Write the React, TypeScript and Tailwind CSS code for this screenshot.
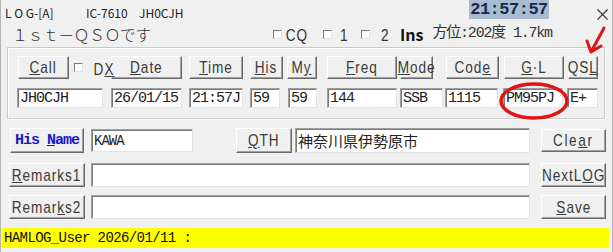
const mono = "font-['Liberation_Mono','Noto_Sans_CJK_JP',monospace]";
const jp = "font-['Noto_Sans_CJK_JP','Noto_Sans',sans-serif]";
const sans = "font-['Liberation_Sans','Noto_Sans',sans-serif]";

const btn =
  "flex items-center justify-center bg-[#f0f0f0] border border-t-white border-l-white border-r-[#696969] border-b-[#696969] shadow-[inset_-1px_-1px_0_#a0a0a0] text-[#3a3a3a] leading-none whitespace-nowrap";
const input =
  "flex items-center bg-white border border-t-[#a0a0a0] border-l-[#a0a0a0] border-r-[#e3e3e3] border-b-[#e3e3e3] shadow-[inset_1px_1px_0_#7a7a7a] pl-[2px] text-[15px] tracking-[-1px] text-[#222] leading-none whitespace-nowrap overflow-hidden " +
  mono;

// tall, narrow label text like the old Windows UI font
function Lbl({ children, className = "" }: { children: React.ReactNode; className?: string }) {
  return (
    <span className={`inline-block scale-x-[0.8] text-[17px] tracking-[1.2px] leading-none ${sans} ${className}`}>
      {children}
    </span>
  );
}

function Check() {
  return (
    <span className="block w-[9px] h-[9px] bg-white border border-t-[#7a7a7a] border-l-[#7a7a7a] border-r-[#e3e3e3] border-b-[#e3e3e3]" />
  );
}

function Btn({ w, ml, h = "h-[23px]", children }: { w: string; ml: string; h?: string; children: React.ReactNode }) {
  return <div className={`${btn} ${w} ${ml} ${h}`}>{children}</div>;
}

function Field({ w, ml, h = "h-[20px]", children }: { w: string; ml: string; h?: string; children?: React.ReactNode }) {
  return <div className={`${input} ${w} ${ml} ${h}`}>{children}</div>;
}

export default function App() {
  return (
    <div className={`relative w-[613px] h-[252px] bg-[#f0f0f0] overflow-hidden border-l border-r border-[#b4b4b4] ${jp}`}>
      {/* title row */}
      <div className="flex h-[21px] text-[12px] leading-none text-[#222]">
        <div className="w-[85px] pl-[4px] pt-[7px] whitespace-pre">L O G-[A]</div>
        <div className="w-[53px] pt-[7px]">IC-7610</div>
        <div className="w-[330px] pt-[7px]">JH0CJH</div>
        <div className={`w-[80px] h-[19px] bg-[#a9bbd0] flex items-center justify-center text-[17px] font-bold text-[#17294a] tracking-[-0.5px] ${mono}`}>
          21:57:57
        </div>
        <div className="ml-[45px] pt-[5px] text-[17px] text-[#333]">×</div>
      </div>

      {/* status row */}
      <div className="flex items-center h-[26px] text-[#333]">
        <div className="ml-[11px] w-[261px] text-[16px] font-light leading-none whitespace-nowrap tracking-[-0.6px]">１ｓｔ－ＱＳＯです</div>
        <Check />
        <span className="ml-[1px] w-[40px]">
          <Lbl>CQ</Lbl>
        </span>
        <Check />
        <span className="ml-[7px] w-[22px]">
          <Lbl>1</Lbl>
        </span>
        <Check />
        <span className="ml-[10px] w-[20px]">
          <Lbl>2</Lbl>
        </span>
        <span className={`text-[16px] font-bold text-[#111] ${jp}`}>Ins</span>
        <span className={`ml-[9px] text-[15px] tracking-[-1.2px] ${mono}`}>方位:202度 1.7km</span>
      </div>

      {/* group box */}
      <div className="ml-[6px] w-[598px] h-[72px] border border-[#c8c8c8] shadow-[inset_1px_1px_0_#fff,1px_1px_0_#fff] pt-[8px]">
        <div className="flex items-center h-[23px]">
          <Btn w="w-[51px]" ml="ml-[10px]">
            <Lbl>
              <u>C</u>all
            </Lbl>
          </Btn>
          <span className="ml-[5px]">
            <Check />
          </span>
          <span className="ml-[8px] w-[20px] text-[#3a3a3a]">
            <Lbl className="tracking-[0px]">
              D<u>X</u>
            </Lbl>
          </span>
          <Btn w="w-[71px]" ml="ml-0">
            <Lbl>
              <u>D</u>ate
            </Lbl>
          </Btn>
          <Btn w="w-[54px]" ml="ml-[7px]">
            <Lbl>
              <u>T</u>ime
            </Lbl>
          </Btn>
          <Btn w="w-[33px]" ml="ml-[7px]">
            <Lbl>
              <u>H</u>is
            </Lbl>
          </Btn>
          <Btn w="w-[30px]" ml="ml-[4px]">
            <Lbl>
              M<u>y</u>
            </Lbl>
          </Btn>
          <Btn w="w-[70px]" ml="ml-[10px]">
            <Lbl>
              <u>F</u>req
            </Lbl>
          </Btn>
          <Btn w="w-[33px]" ml="ml-[3px]">
            <Lbl className="tracking-[0px]">
              <u>M</u>ode
            </Lbl>
          </Btn>
          <Btn w="w-[53px]" ml="ml-[13px]">
            <Lbl>
              Cod<u>e</u>
            </Lbl>
          </Btn>
          <Btn w="w-[60px]" ml="ml-[5px]">
            <Lbl>
              <u>G</u>·L
            </Lbl>
          </Btn>
          <Btn w="w-[30px]" ml="ml-[4px]">
            <Lbl className="tracking-[0px]">
              QS<u>L</u>
            </Lbl>
          </Btn>
        </div>
        <div className="flex items-center mt-[9px]">
          <Field w="w-[86px]" ml="ml-[9px]">JH0CJH</Field>
          <Field w="w-[71px]" ml="ml-[8px]">26/01/15</Field>
          <Field w="w-[54px]" ml="ml-[7px]">21:57J</Field>
          <Field w="w-[30px]" ml="ml-[7px]">59</Field>
          <Field w="w-[29px]" ml="ml-[8px]">59</Field>
          <Field w="w-[70px]" ml="ml-[10px]">144</Field>
          <Field w="w-[43px]" ml="ml-[3px]">SSB</Field>
          <Field w="w-[53px]" ml="ml-[2px]">1115</Field>
          <Field w="w-[60px]" ml="ml-[5px]">PM95PJ</Field>
          <Field w="w-[31px]" ml="ml-[4px]">E+</Field>
        </div>
      </div>

      {/* lower rows */}
      <div className="flex items-center h-[25px] mt-[9px]">
        <Btn w="w-[74px]" ml="ml-[9px]" h="h-[25px]">
          <span className={`font-bold text-[#1818c8] text-[15px] tracking-[-1px] ${mono}`}>
            His <u>N</u>ame
          </span>
        </Btn>
        <Field w="w-[102px]" ml="ml-[7px]" h="h-[23px]">
          <span className="text-[14px]">KAWA</span>
        </Field>
        <Btn w="w-[56px]" ml="ml-[43px]" h="h-[25px]">
          <Lbl>
            <u>Q</u>TH
          </Lbl>
        </Btn>
        <Field w="w-[235px]" ml="ml-[3px]" h="h-[25px]">
          <span className={`text-[15px] tracking-normal ${jp}`}>神奈川県伊勢原市</span>
        </Field>
        <Btn w="w-[65px]" ml="ml-[11px]">
          <Lbl className="tracking-[2px]">
            Cle<u>a</u>r
          </Lbl>
        </Btn>
      </div>
      <div className="flex items-center h-[24px] mt-[10px]">
        <Btn w="w-[76px]" ml="ml-[8px]" h="h-[24px]">
          <Lbl className="tracking-[0.5px]">
            <u>R</u>emarks1
          </Lbl>
        </Btn>
        <Field w="w-[439px]" ml="ml-[6px]" h="h-[24px]" />
        <Btn w="w-[65px]" ml="ml-[11px]" h="h-[24px]">
          <Lbl className="tracking-[0px]">
            NextL<u>O</u>G
          </Lbl>
        </Btn>
      </div>
      <div className="flex items-center h-[24px] mt-[8px]">
        <Btn w="w-[76px]" ml="ml-[8px]" h="h-[24px]">
          <Lbl className="tracking-[0.5px]">
            Remar<u>k</u>s2
          </Lbl>
        </Btn>
        <Field w="w-[439px]" ml="ml-[6px]" h="h-[24px]" />
        <Btn w="w-[65px]" ml="ml-[11px]" h="h-[24px]">
          <Lbl>
            <u>S</u>ave
          </Lbl>
        </Btn>
      </div>

      {/* status bar */}
      <div className={`ml-[1px] mt-[9px] w-[607px] h-[20px] bg-[#ffff00] flex items-center pl-[2px] text-[14px] tracking-[-0.6px] text-[#111] ${mono}`}>
        HAMLOG_User 2026/01/11 :
      </div>

      {/* red annotations */}
      <svg className="absolute left-0 top-0 pointer-events-none" width="613" height="252">
        <ellipse cx="533" cy="101" rx="33" ry="17" fill="none" stroke="#e01515" strokeWidth="3.5" />
        <path d="M603 28 L590 52 M586 41 L590 52 L600 46" fill="none" stroke="#e01515" strokeWidth="3" strokeLinecap="round" strokeLinejoin="round" />
      </svg>
    </div>
  );
}
